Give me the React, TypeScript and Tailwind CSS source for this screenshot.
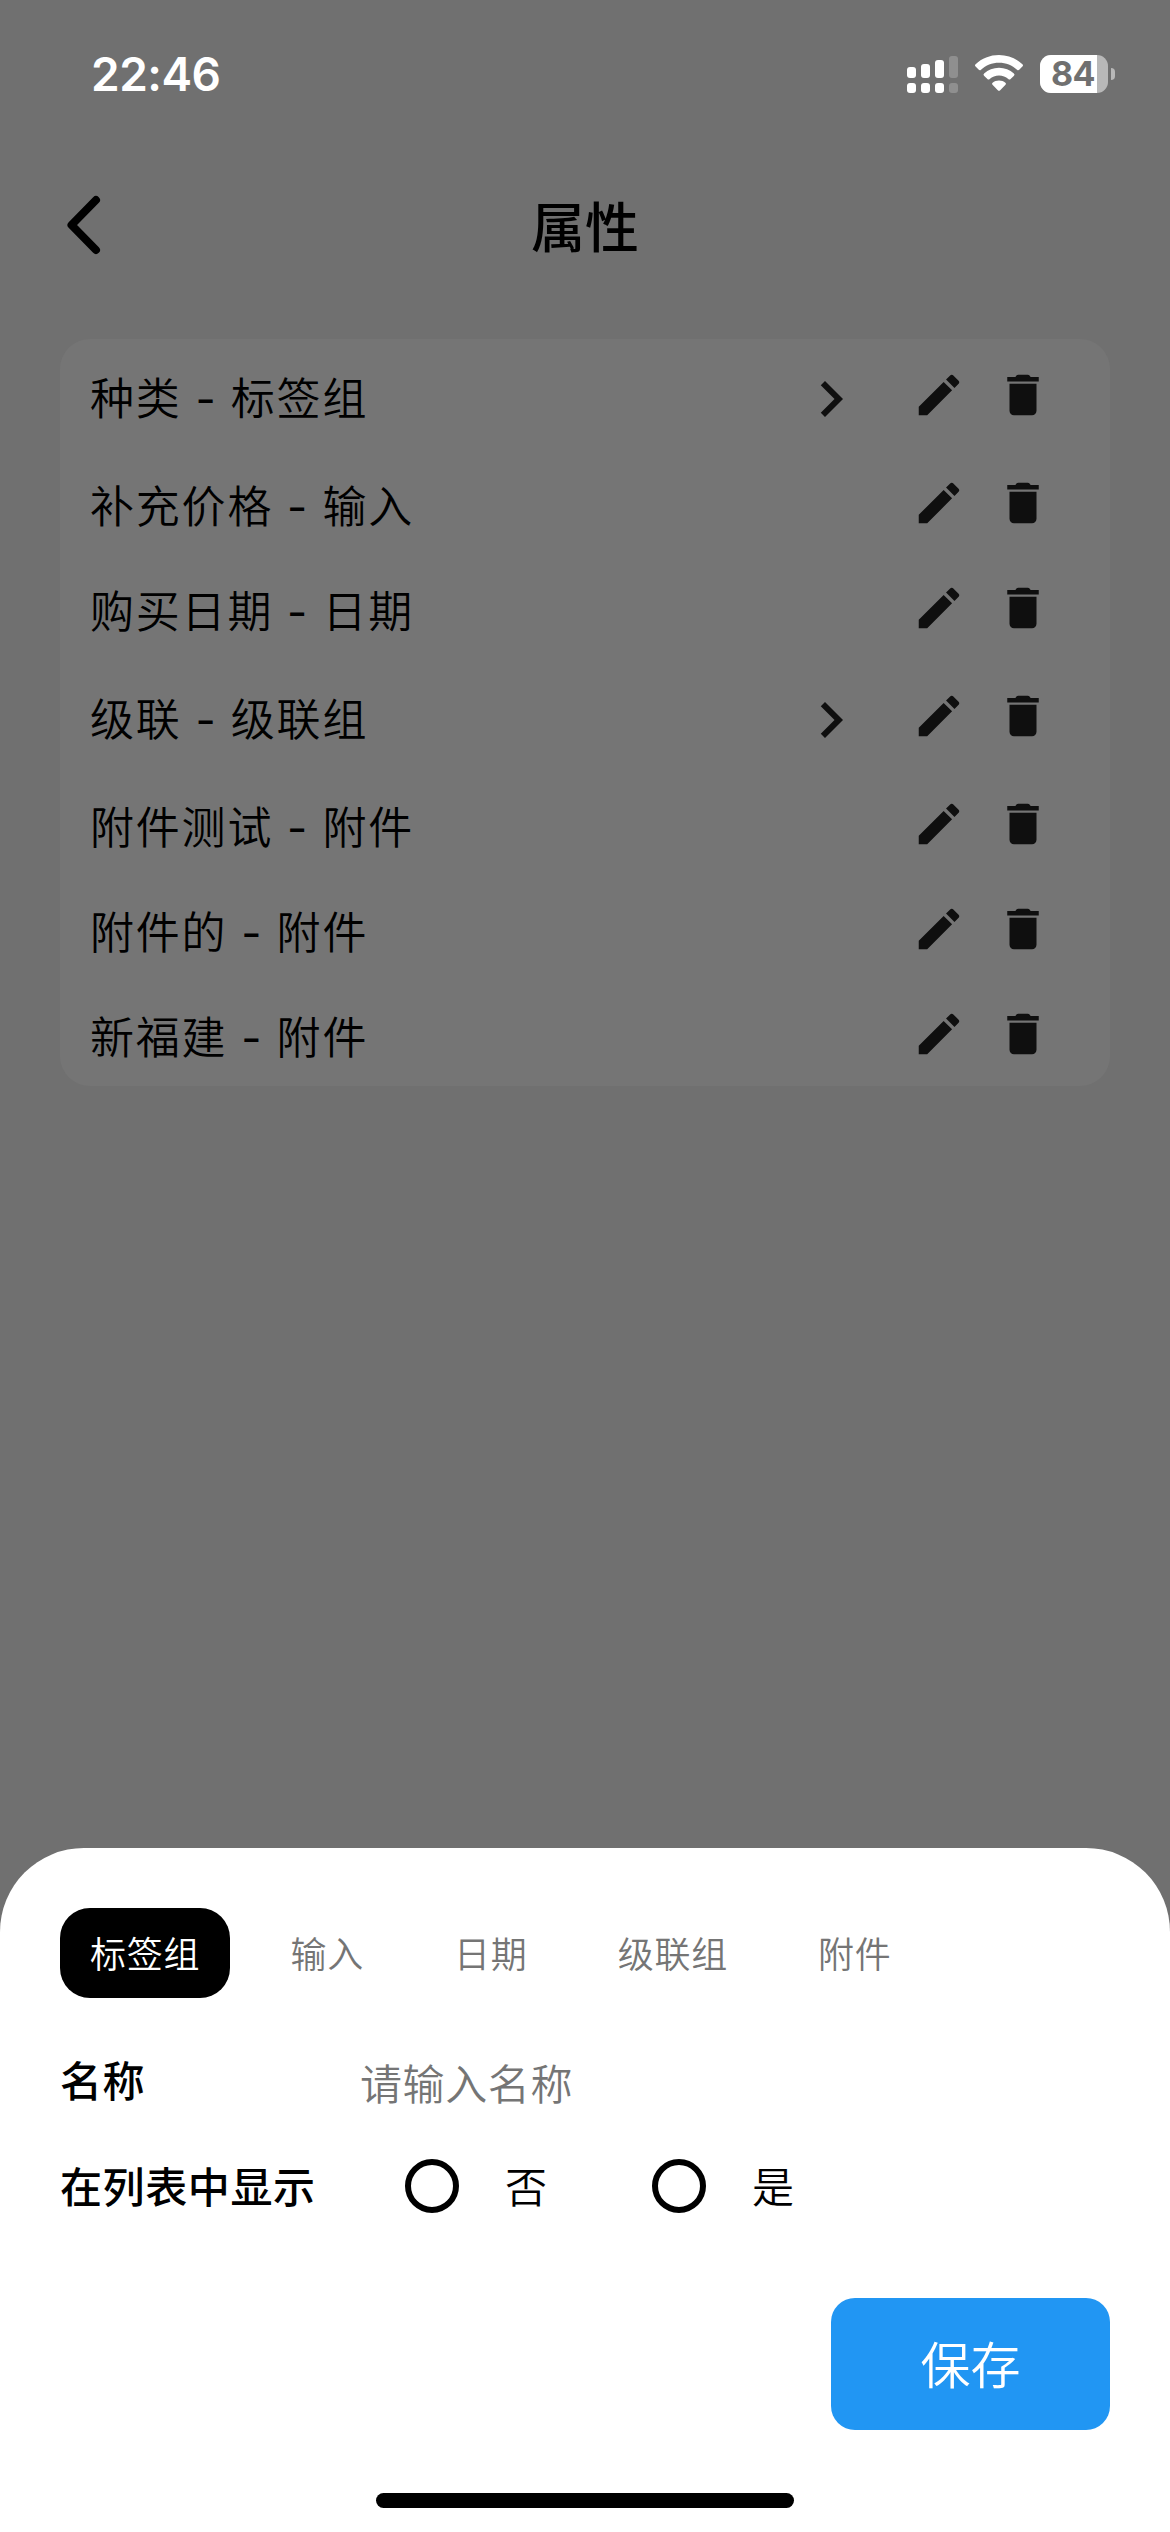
import clsx from "clsx";

type Property = {
  name: string;
  type: string;
  expandable?: boolean;
  compact?: boolean;
};

const properties: Property[] = [
  { name: "种类", type: "标签组", expandable: true },
  { name: "补充价格", type: "输入", compact: true },
  { name: "购买日期", type: "日期" },
  { name: "级联", type: "级联组", expandable: true },
  { name: "附件测试", type: "附件", compact: true },
  { name: "附件的", type: "附件", compact: true },
  { name: "新福建", type: "附件" },
];

const tabs = ["标签组", "输入", "日期", "级联组", "附件"];

const SignalIcon = () => (
  <svg className="h-[38px] w-[52px]" viewBox="0 0 52 38" fill="white">
    <rect x="0" y="12" width="9" height="11" rx="3" />
    <rect x="14" y="9" width="9" height="14" rx="3" />
    <rect x="28" y="5" width="9" height="18" rx="3" />
    <rect x="42" y="1" width="9" height="22" rx="3" opacity="0.22" />
    <rect x="0" y="28" width="9" height="10" rx="3" />
    <rect x="14" y="28" width="9" height="10" rx="3" />
    <rect x="28" y="28" width="9" height="10" rx="3" />
    <rect x="42" y="28" width="9" height="10" rx="3" opacity="0.22" />
  </svg>
);

const WifiIcon = () => (
  <svg className="h-[38px] w-[50px]" viewBox="0 0 50 38" fill="white">
    <path d="M25 0C34 0 42.3 3.4 48.4 9.2Q49.6 10.4 48.4 11.6L45.2 14.8Q44.2 15.8 43 14.7C38.2 10.3 32 7.7 25 7.7S11.8 10.3 7 14.7Q5.8 15.8 4.8 14.8L1.6 11.6Q.4 10.4 1.6 9.2C7.7 3.4 16 0 25 0Z" />
    <path d="M25 12.8C30.700 12.800 35.900 15 39.900 18.500Q41.100 19.600 40 20.700L36.600 24.100Q35.500 25.100 34.300 24.100C31.800 22 28.600 20.600 25 20.600S18.200 22 15.700 24.100Q14.500 25.100 13.400 24.100L10 20.700Q8.900 19.600 10.100 18.500C14.100 15 19.300 12.800 25 12.800Z" />
    <path d="M25 25.600C27.500 25.600 29.700 26.400 31.400 27.700Q32.600 28.700 31.500 29.800L26.200 35.200Q25 36.300 23.800 35.200L18.500 29.800Q17.400 28.700 18.600 27.700C20.300 26.400 22.500 25.600 25 25.600Z" />
  </svg>
);

const BatteryIcon = () => (
  <div className="flex items-center gap-[3px]">
    <div className="flex h-[38px] w-[68px] rounded-[11px] bg-[#b8b8b8]">
      <div className="flex h-full w-[57px] items-center justify-center rounded-l-[11px] bg-white pl-[9px] font-['Inter'] text-[34px] leading-[38px] font-bold tracking-[-0.5px] text-[#707070]">
        84
      </div>
    </div>
    <div className="h-[12px] w-[4px] rounded-r-full bg-[#b8b8b8]" />
  </div>
);

const ChevronIcon = () => (
  <svg className="mt-[24px] h-[72px] w-[72px]" viewBox="0 0 24 24" fill="#0f0f0f">
    <path d="M10 6 8.590 7.410 13.170 12l-4.580 4.590L10 18l6-6z" />
  </svg>
);

const EditIcon = () => (
  <svg className="mt-[29px] h-[54px] w-[54px]" viewBox="0 0 24 24" fill="#0f0f0f">
    <path d="M3 17.250V21h3.750L17.810 9.940l-3.750-3.750zM20.710 7.040c.39-.39.39-1.020 0-1.410l-2.340-2.340c-.39-.39-1.020-.39-1.410 0l-1.830 1.830 3.750 3.750z" />
  </svg>
);

const TrashIcon = () => (
  <svg className="mt-[29px] h-[54px] w-[54px]" viewBox="0 0 24 24" fill="#0f0f0f">
    <path d="M6 19c0 1.100.9 2 2 2h8c1.100 0 2-.9 2-2V7H6zM19 4h-3.600l-.5-.65Q14.600 3 14.100 3H9.900Q9.400 3 9.100 3.350L8.600 4H5v2h14z" />
  </svg>
);

const StatusBar = () => (
  <div className="flex h-[150px] items-start justify-between pt-[55px] pr-[55px] pl-[91px]">
    <div className="-mt-[9px] font-['Inter'] text-[46px] leading-[56px] font-semibold tracking-[-0.5px] text-white">
      22:46
    </div>
    <div className="flex">
      <SignalIcon />
      <div className="w-[15px]" />
      <WifiIcon />
      <div className="w-[16px]" />
      <BatteryIcon />
    </div>
  </div>
);

const Header = () => (
  <div className="grid h-[150px] grid-cols-3 items-center px-[60px]">
    <svg
      className="h-[60px] w-[42px]"
      viewBox="0 0 42 60"
      fill="none"
      stroke="black"
      strokeWidth="8"
      strokeLinecap="round"
      strokeLinejoin="round"
    >
      <path d="M36 5 11.500 30 36 55" />
    </svg>
    <h1 className="text-center text-[54px] leading-[60px] font-medium">属性</h1>
  </div>
);

const PropertyRow = ({ property }: { property: Property }) => (
  <div
    className={clsx(
      "flex items-start pr-[60px] pl-[30px]",
      property.compact ? "h-[105px]" : "h-[108px]"
    )}
  >
    <div className="mt-[25px] flex-1 text-[44px] leading-[64px] font-[350] tracking-[1.8px]">
      {property.name}
      <span className="font-['Inter'] font-normal tracking-[1.4px] whitespace-pre">
        {" - "}
      </span>
      {property.type}
    </div>
    {property.expandable && <ChevronIcon />}
    <div className="ml-[45px] flex gap-[30px]">
      <EditIcon />
      <TrashIcon />
    </div>
  </div>
);

const Radio = ({ label }: { label: string }) => (
  <label className="flex items-center">
    <span className="h-[54px] w-[54px] rounded-full border-[6px] border-black" />
    <span className="-mt-[3px] ml-[46px] text-[42px] leading-[54px] font-[350]">
      {label}
    </span>
  </label>
);

const PropertySheet = () => (
  <div className="flex h-[684px] flex-col rounded-t-[84px] bg-white px-[60px] pt-[60px]">
    <div className="flex gap-[30px]">
      {tabs.map((tab, index) => (
        <button
          key={tab}
          className={clsx(
            "h-[90px] rounded-[30px] px-[30px] pb-[2px] text-[36px] leading-[60px] font-[350] tracking-[0.8px]",
            index === 0 ? "bg-black text-white" : "text-[#757575]"
          )}
        >
          {tab}
        </button>
      ))}
    </div>
    <div className="mt-[51px] flex h-[60px] items-center text-[42px] leading-[60px] tracking-[0.6px]">
      <div className="w-[300px] font-medium">名称</div>
      <div className="mt-[5px] font-[350] text-[#757575]">请输入名称</div>
    </div>
    <div className="mt-[47px] flex h-[60px] items-center">
      <div className="-mt-[3px] w-[345px] text-[42px] leading-[60px] font-medium tracking-[0.6px]">
        在列表中显示
      </div>
      <div className="flex gap-[105px]">
        <Radio label="否" />
        <Radio label="是" />
      </div>
    </div>
    <button className="mt-[82px] h-[132px] w-[279px] self-end rounded-[24px] bg-[#2196f3] pb-[4px] text-[50px] leading-[80px] font-[350] text-white">
      保存
    </button>
    <div className="mt-[63px] h-[15px] w-[418px] self-center rounded-full bg-black" />
  </div>
);

export default function App() {
  return (
    <div className="flex h-[2532px] w-[1170px] flex-col justify-between overflow-hidden bg-[#707070] font-['Noto_Sans_CJK_SC',sans-serif] text-black">
      <div>
        <StatusBar />
        <Header />
        <div className="mx-[60px] mt-[39px] rounded-[30px] bg-[#757575]">
          {properties.map((property) => (
            <PropertyRow key={property.name} property={property} />
          ))}
        </div>
      </div>
      <PropertySheet />
    </div>
  );
}
